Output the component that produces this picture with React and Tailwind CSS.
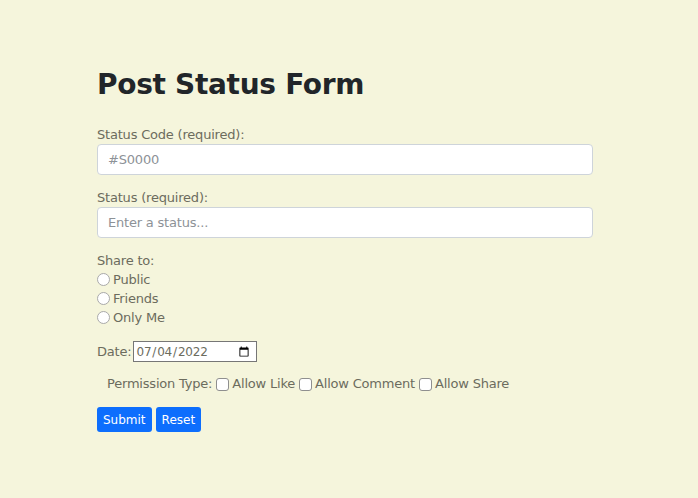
import React from "react";

const font = { fontFamily: '"DejaVu Sans", sans-serif' };

export default function App() {
  return (
    <div className="min-h-[498px] bg-[#f5f5dc] text-[#6c6c5e]" style={font}>
      <div className="w-[496px] ml-[97px] pt-[66px]">
        <h1 className="text-[28px] font-bold text-[#212529] leading-[38px] tracking-[-0.3px]">Post Status Form</h1>

        <form className="mt-[20px] text-[13px] tracking-[-0.2px]">
          <div>
            <label className="block leading-[20px] translate-y-[1px]">Status Code (required):</label>
            <input
              type="text"
              placeholder="#S0000"
              className="block w-full h-[31px] px-[10px] bg-white border border-[#ced4da] rounded-[4px] text-[13px] placeholder:text-[#8d9297] outline-none"
            />
          </div>

          <div className="mt-[12px]">
            <label className="block leading-[20px] translate-y-[1px]">Status (required):</label>
            <input
              type="text"
              placeholder="Enter a status..."
              className="block w-full h-[31px] px-[10px] bg-white border border-[#ced4da] rounded-[4px] text-[13px] placeholder:text-[#8d9297] outline-none"
            />
          </div>

          <div className="mt-[13px] leading-[19px]">
            <div>Share to:</div>
            {["Public", "Friends", "Only Me"].map((s) => (
              <label key={s} className="flex items-center">
                <input
                  type="radio"
                  name="share"
                  className="appearance-none m-0 mr-[3px] w-[13px] h-[13px] rounded-full bg-white border border-[#a9a9a9]"
                />
                {s}
              </label>
            ))}
          </div>

          <div className="mt-[14px] flex items-center h-[21px]">
            <label className="mr-[2px]">Date:</label>
            <input
              type="date"
              defaultValue="2022-07-04"
              className="w-[124px] h-[21px] bg-white border border-[#767676] text-[12px] text-[#6c6c5e] pl-[1px] pr-[4px]"
              style={font}
            />
          </div>

          <div className="mt-[12px] ml-[10px] flex items-center h-[20px]">
            <span>Permission Type:</span>
            {["Allow Like", "Allow Comment", "Allow Share"].map((s) => (
              <label key={s} className="flex items-center">
                <input
                  type="checkbox"
                  className="appearance-none ml-[4px] mr-[3px] w-[13px] h-[13px] rounded-[3px] bg-white border border-[#8f8f8f]"
                />
                {s}
              </label>
            ))}
          </div>

          <div className="mt-[13px] flex gap-[4px] tracking-normal">
            <button type="button" className="h-[25px] px-[6px] bg-[#0d6efd] text-white text-[12px] rounded-[3px]">Submit</button>
            <button type="button" className="h-[25px] px-[6px] bg-[#0d6efd] text-white text-[12px] rounded-[3px]">Reset</button>
          </div>
        </form>
      </div>
    </div>
  );
}
